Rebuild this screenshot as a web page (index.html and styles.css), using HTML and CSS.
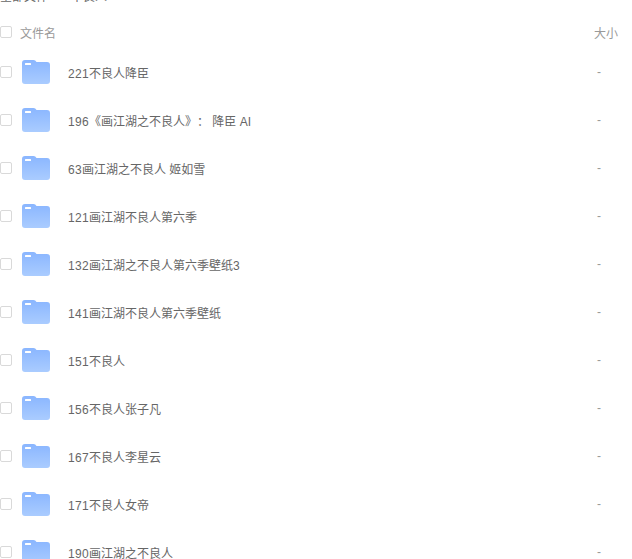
FILE: index.html
```html
<!DOCTYPE html>
<html lang="zh">
<head>
<meta charset="utf-8">
<title>文件列表</title>
<link rel="stylesheet" href="styles.css">
</head>
<body>
<svg class="defs" width="0" height="0" aria-hidden="true">
  <defs>
    <linearGradient id="fg" x1="0" y1="0" x2="0" y2="1">
      <stop offset="0" stop-color="#8ab6ff"/>
      <stop offset="1" stop-color="#aaccff"/>
    </linearGradient>
    <symbol id="folder" viewBox="0 0 28 24">
      <path d="M3 0h8.5c1.4 0 2.2.7 3 2h10.5a3 3 0 0 1 3 3v16a3 3 0 0 1-3 3H3a3 3 0 0 1-3-3V3a3 3 0 0 1 3-3z" fill="url(#fg)"/>
      <rect x="3" y="3" width="6" height="2" rx="0.5" fill="#fff"/>
    </symbol>
  </defs>
</svg>
<div class="crumb"><span>全部文件</span><span class="sep">&gt;</span><span>不良人</span></div>
<div class="head">
  <span class="check"></span>
  <span class="head-name">文件名</span>
  <span class="head-size">大小</span>
</div>
<div class="row"><span class="check"></span><svg class="icon"><use href="#folder"/></svg><span class="name"><span class="num">221</span>不良人降臣</span><span class="size">-</span></div>
<div class="row"><span class="check"></span><svg class="icon"><use href="#folder"/></svg><span class="name"><span class="num">196</span>《画江湖之不良人》： 降臣 AI</span><span class="size">-</span></div>
<div class="row"><span class="check"></span><svg class="icon"><use href="#folder"/></svg><span class="name"><span class="num">63</span>画江湖之不良人 姬如雪</span><span class="size">-</span></div>
<div class="row"><span class="check"></span><svg class="icon"><use href="#folder"/></svg><span class="name"><span class="num">121</span>画江湖不良人第六季</span><span class="size">-</span></div>
<div class="row"><span class="check"></span><svg class="icon"><use href="#folder"/></svg><span class="name"><span class="num">132</span>画江湖之不良人第六季壁纸<span class="num">3</span></span><span class="size">-</span></div>
<div class="row"><span class="check"></span><svg class="icon"><use href="#folder"/></svg><span class="name"><span class="num">141</span>画江湖不良人第六季壁纸</span><span class="size">-</span></div>
<div class="row"><span class="check"></span><svg class="icon"><use href="#folder"/></svg><span class="name"><span class="num">151</span>不良人</span><span class="size">-</span></div>
<div class="row"><span class="check"></span><svg class="icon"><use href="#folder"/></svg><span class="name"><span class="num">156</span>不良人张子凡</span><span class="size">-</span></div>
<div class="row"><span class="check"></span><svg class="icon"><use href="#folder"/></svg><span class="name"><span class="num">167</span>不良人李星云</span><span class="size">-</span></div>
<div class="row"><span class="check"></span><svg class="icon"><use href="#folder"/></svg><span class="name"><span class="num">171</span>不良人女帝</span><span class="size">-</span></div>
<div class="row"><span class="check"></span><svg class="icon"><use href="#folder"/></svg><span class="name"><span class="num">190</span>画江湖之不良人</span><span class="size">-</span></div>
</body>
</html>
```
FILE: styles.css
```css
html, body {
  margin: 0;
  padding: 0;
  height: 559px;
  overflow: hidden;
  background: #fff;
}
body {
  font-family: "Liberation Sans", "Noto Sans CJK SC", sans-serif;
  font-size: 12px;
  color: #666;
  text-spacing-trim: space-all;
  font-feature-settings: "palt" 0, "chws" 0;
}
.defs {
  display: block;
  height: 0;
}
.crumb {
  display: flex;
  gap: 8px;
  height: 16px;
  line-height: 16px;
  margin-top: -11px;
  color: #666;
}
.head {
  display: flex;
  align-items: center;
  height: 32px;
  margin-top: 11px;
  color: #999;
}
.head-name {
  margin-left: 8px;
}
.head-size {
  margin-left: auto;
  margin-right: 14px;
}
.check {
  flex: none;
  box-sizing: border-box;
  width: 12px;
  height: 12px;
  border: 1px solid #d9d9d9;
  border-radius: 2px;
  background: #fff;
}
.row {
  display: flex;
  align-items: center;
  height: 48px;
}
.icon {
  flex: none;
  width: 28px;
  height: 24px;
  margin-left: 10px;
}
.name {
  margin-left: 18px;
  color: #666;
}
.num {
  letter-spacing: 0.33px;
}
.size {
  margin-left: auto;
  margin-right: 31px;
  color: #999;
}
```
